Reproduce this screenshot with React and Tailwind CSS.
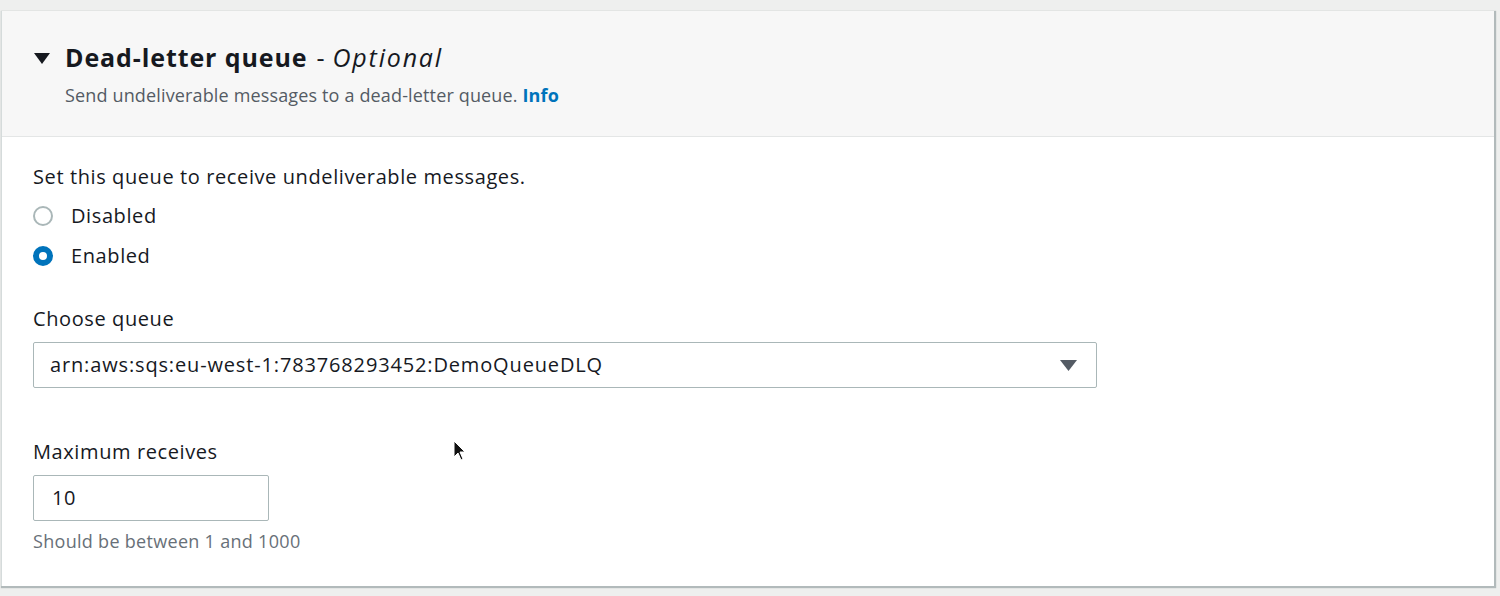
import React from "react";

export default function App() {
  const font = { fontFamily: "'Open Sans', sans-serif" };
  return (
    <div className="w-[1500px] h-[596px] bg-[#eeefee] pt-[11px] relative overflow-hidden" style={font}>
      <div className="ml-[1px] w-[1493px] h-[575px] bg-white border-l border-[#d5dbdb] shadow-[1px_1px_1px_1px_rgba(0,28,36,0.25)] flex flex-col">
        <div className="h-[126px] bg-[#f7f7f7] border-b border-[#e4e6e6] pl-[31px] pt-[30px]">
          <div className="flex items-center h-[34px]">
            <svg width="18" height="14" viewBox="0 0 18 14" className="mr-[14px]">
              <polygon points="1,2 17,2 9,13" fill="#16191f" />
            </svg>
            <span className="text-[25px] font-bold text-[#16191f] tracking-[0.9px]">Dead-letter queue</span>
            <span className="text-[25px] text-[#16191f] ml-[9px]">-</span>
            <span className="text-[25px] italic text-[#16191f] ml-[8px] tracking-[1.8px]">Optional</span>
          </div>
          <div className="pl-[32px] mt-[9px] text-[18px] text-[#545b64] leading-[22px] tracking-[0.15px]">
            Send undeliverable messages to a dead-letter queue.{" "}
            <span className="font-bold text-[#0073bb]">Info</span>
          </div>
        </div>
        <div className="pl-[31px] pt-[28px] text-[#16191f] text-[20px] tracking-[0.6px]">
          <div className="leading-[24px]">Set this queue to receive undeliverable messages.</div>
          <div className="mt-[15px] flex flex-col gap-[16px]">
            <div className="flex items-center h-[24px]">
              <div className="w-[20px] h-[20px] rounded-full border-2 border-[#aab7b8] bg-white" />
              <span className="ml-[18px]">Disabled</span>
            </div>
            <div className="flex items-center h-[24px]">
              <div className="w-[20px] h-[20px] rounded-full border-[6px] border-[#0073bb] bg-white" />
              <span className="ml-[18px]">Enabled</span>
            </div>
          </div>
          <div className="mt-[39px] leading-[24px]">Choose queue</div>
          <div className="mt-[11px] w-[1064px] h-[46px] border border-[#aab7b8] rounded-[2px] flex items-center pl-[16px] pr-[19px]">
            <span className="flex-1 tracking-[0.85px]">arn:aws:sqs:eu-west-1:783768293452:DemoQueueDLQ</span>
            <svg width="17" height="12" viewBox="0 0 17 12">
              <polygon points="0,1 17,1 8.5,12" fill="#545b64" />
            </svg>
          </div>
          <div className="mt-[52px] leading-[24px]">Maximum receives</div>
          <div className="mt-[11px] w-[236px] h-[46px] border border-[#aab7b8] rounded-[2px] flex items-center pl-[18px]">
            <span>10</span>
          </div>
          <div className="mt-[9px] text-[18px] text-[#687078] leading-[22px] tracking-[0.3px]">Should be between 1 and 1000</div>
        </div>
      </div>
      <svg className="absolute left-[453px] top-[440px]" width="14" height="22" viewBox="0 0 14 22">
        <path d="M1 1 L1 17 L5 13 L8 20 L10 19 L7 12 L12 12 Z" fill="#111" stroke="#fff" strokeWidth="1" />
      </svg>
    </div>
  );
}
